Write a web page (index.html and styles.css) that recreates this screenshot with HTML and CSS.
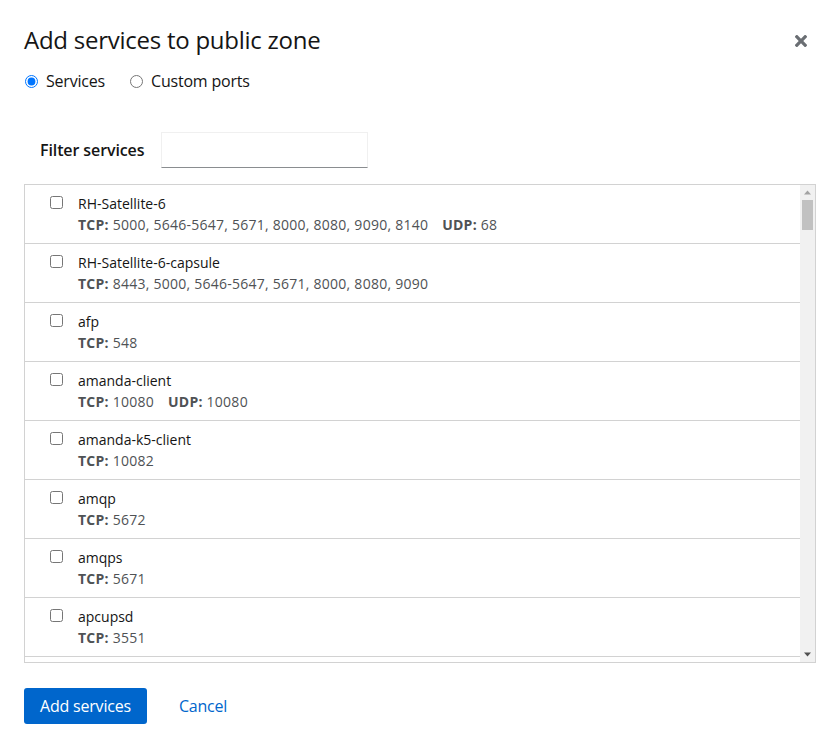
FILE: index.html
```html
<!DOCTYPE html>
<html lang="en">
<head>
<meta charset="utf-8">
<title>Add services to public zone</title>
<link rel="stylesheet" href="styles.css">
</head>
<body>
<div class="modal">
  <header class="modal-header">
    <h1 class="modal-title">Add services to public zone</h1>
    <button class="close-btn" aria-label="Close">
      <svg class="close-icon" viewBox="0 80 352 352" aria-hidden="true"><path d="M242.72 256l100.07-100.07c12.28-12.28 12.28-32.19 0-44.48l-22.240-22.24c-12.28-12.28-32.19-12.28-44.48 0L176 189.28 75.930 89.21c-12.28-12.28-32.19-12.28-44.48 0L9.21 111.45c-12.28 12.28-12.28 32.19 0 44.48L109.280 256 9.21 356.07c-12.28 12.28-12.28 32.19 0 44.48l22.24 22.24c12.28 12.28 32.2 12.28 44.48 0L176 322.72l100.07 100.07c12.28 12.28 32.2 12.28 44.48 0l22.24-22.24c12.28-12.28 12.28-32.19 0-44.48L242.72 256z"/></svg>
    </button>
  </header>

  <div class="mode-row">
    <label class="radio"><input type="radio" name="mode" checked><span>Services</span></label>
    <label class="radio"><input type="radio" name="mode"><span>Custom ports</span></label>
  </div>

  <div class="filter-row">
    <label class="filter-label" for="filter">Filter services</label>
    <input id="filter" class="filter-input" type="text">
  </div>

  <div class="list-frame">
  <ul class="svc-list">
    <li class="svc"><input type="checkbox" class="svc-check"><div class="svc-body"><div class="svc-name">RH-Satellite-6</div><div class="svc-ports"><span class="proto"><b>TCP:</b> 5000, 5646-5647, 5671, 8000, 8080, 9090, 8140</span><span class="proto"><b>UDP:</b> 68</span></div></div></li>
    <li class="svc"><input type="checkbox" class="svc-check"><div class="svc-body"><div class="svc-name">RH-Satellite-6-capsule</div><div class="svc-ports"><span class="proto"><b>TCP:</b> 8443, 5000, 5646-5647, 5671, 8000, 8080, 9090</span></div></div></li>
    <li class="svc"><input type="checkbox" class="svc-check"><div class="svc-body"><div class="svc-name">afp</div><div class="svc-ports"><span class="proto"><b>TCP:</b> 548</span></div></div></li>
    <li class="svc"><input type="checkbox" class="svc-check"><div class="svc-body"><div class="svc-name">amanda-client</div><div class="svc-ports"><span class="proto"><b>TCP:</b> 10080</span><span class="proto"><b>UDP:</b> 10080</span></div></div></li>
    <li class="svc"><input type="checkbox" class="svc-check"><div class="svc-body"><div class="svc-name">amanda-k5-client</div><div class="svc-ports"><span class="proto"><b>TCP:</b> 10082</span></div></div></li>
    <li class="svc"><input type="checkbox" class="svc-check"><div class="svc-body"><div class="svc-name">amqp</div><div class="svc-ports"><span class="proto"><b>TCP:</b> 5672</span></div></div></li>
    <li class="svc"><input type="checkbox" class="svc-check"><div class="svc-body"><div class="svc-name">amqps</div><div class="svc-ports"><span class="proto"><b>TCP:</b> 5671</span></div></div></li>
    <li class="svc"><input type="checkbox" class="svc-check"><div class="svc-body"><div class="svc-name">apcupsd</div><div class="svc-ports"><span class="proto"><b>TCP:</b> 3551</span></div></div></li>
    <li class="svc"><input type="checkbox" class="svc-check"><div class="svc-body"><div class="svc-name">audit</div><div class="svc-ports"><span class="proto"><b>TCP:</b> 60</span></div></div></li>
  </ul>
  <div class="scrollbar" aria-hidden="true">
    <div class="sb-btn sb-up"><svg viewBox="0 0 15 15"><path d="M4 9.5h7L7.5 5.5z"/></svg></div>
    <div class="sb-track"><div class="sb-thumb"></div></div>
    <div class="sb-btn sb-down"><svg viewBox="0 0 15 15"><path d="M4 5.5h7L7.5 9.5z"/></svg></div>
  </div>
  </div>

  <footer class="modal-footer">
    <button class="btn btn-primary">Add services</button>
    <button class="btn btn-link">Cancel</button>
  </footer>
</div>
</body>
</html>
```

FILE: styles.css
```css
* { box-sizing: border-box; }

html, body {
  margin: 0;
  padding: 0;
  background: #fff;
}

body {
  font-family: "Open Sans", "Liberation Sans", sans-serif;
  font-size: 16px;
  line-height: 1.5;
  color: #151515;
}

.modal {
  position: relative;
  padding: 24px 24px 0 24px;
}

.modal-header {
  display: flex;
  align-items: flex-start;
}

.modal-title {
  margin: 0;
  font-size: 24px;
  font-weight: 400;
  line-height: 31px;
  letter-spacing: -0.25px;
  color: #151515;
}

.close-btn {
  position: absolute;
  top: 24px;
  right: 16px;
  width: 46px;
  height: 34px;
  padding: 0;
  border: 0;
  background: transparent;
  display: flex;
  align-items: center;
  justify-content: center;
  cursor: pointer;
}

.close-icon {
  width: 12px;
  height: 12px;
  fill: #6a6e73;
}

.mode-row {
  display: flex;
  align-items: center;
  gap: 24px;
  margin-top: 14px;
  height: 24px;
}

.radio {
  display: flex;
  align-items: center;
  gap: 8px;
  font-size: 16px;
  line-height: 24px;
  color: #151515;
}

.radio span {
  letter-spacing: -0.2px;
}

.radio input {
  margin: 0 0 0 1px;
  width: 13px;
  height: 13px;
}

.filter-row {
  display: flex;
  align-items: center;
  gap: 17px;
  margin-top: 39px;
  padding-left: 16px;
  height: 36px;
}

.filter-label {
  font-weight: 600;
  font-size: 16px;
  letter-spacing: -0.1px;
  color: #151515;
}

.filter-input {
  width: 207px;
  height: 36px;
  margin: 0;
  padding: 6px 8px;
  font: inherit;
  border: 1px solid #f0f0f0;
  border-bottom-color: #8a8d90;
  outline: none;
}

.list-frame {
  display: flex;
  margin-top: 16px;
  height: 479px;
  border: 1px solid #d2d2d2;
}

.svc-list {
  flex: 1;
  list-style: none;
  margin: 0;
  padding: 0;
  overflow: hidden;
}

.scrollbar {
  flex: none;
  width: 15px;
  display: flex;
  flex-direction: column;
  background: #f1f1f1;
}

.sb-btn {
  height: 15px;
  flex: none;
}

.sb-btn svg {
  display: block;
  width: 15px;
  height: 15px;
}

.sb-up svg { fill: #a3a3a3; }
.sb-down svg { fill: #505050; }

.sb-track {
  flex: 1;
  padding: 0 2px;
}

.sb-thumb {
  height: 30px;
  background: #c1c1c1;
}

.svc {
  display: flex;
  align-items: flex-start;
  padding: 8px 0 8px 25px;
  border-bottom: 1px solid #d2d2d2;
  font-size: 14px;
  line-height: 21px;
}

.svc-check {
  margin: 3px 15px 0 0;
  width: 13px;
  height: 13px;
  flex: none;
}

.svc-name {
  color: #151515;
}

.svc-ports {
  display: flex;
  gap: 14px;
  color: #4f5255;
  letter-spacing: 0.25px;
}

.svc-ports b {
  font-weight: 700;
  color: #4f5255;
}

.modal-footer {
  display: flex;
  align-items: center;
  gap: 16px;
  margin-top: 25px;
}

.btn {
  font: inherit;
  font-size: 16px;
  line-height: 24px;
  padding: 6px 16px;
  border: 0;
  border-radius: 3px;
  background: transparent;
  cursor: pointer;
  letter-spacing: -0.2px;
}

.btn-primary {
  background: #0066cc;
  color: #fff;
}

.btn-link {
  color: #0066cc;
}
```
